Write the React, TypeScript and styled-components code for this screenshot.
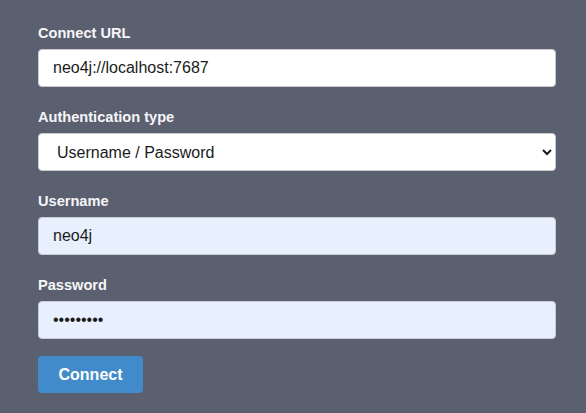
import React from "react";
import styled, { createGlobalStyle } from "styled-components";

const Global = createGlobalStyle`
  html, body { margin: 0; padding: 0; background: #5b6070; }
  body { font-family: "Liberation Sans", Arial, sans-serif; }
`;

const Form = styled.form`
  display: flex;
  flex-direction: column;
  padding: 25px 30px 20px 38px;
`;

const Field = styled.div`
  display: flex;
  flex-direction: column;
  margin-bottom: 22px;
  &:last-of-type { margin-bottom: 17px; }
`;

const Label = styled.label`
  font-size: 14.6px;
  font-weight: bold;
  color: #f6f6f8;
  line-height: 16px;
  margin-bottom: 8px;
`;

const Input = styled.input<{ $autofill?: boolean }>`
  box-sizing: border-box;
  height: 38px;
  width: 100%;
  padding: 0 14px;
  font-family: "Liberation Sans", Arial, sans-serif;
  font-size: 16px;
  color: #1a1c20;
  background: ${(p) => (p.$autofill ? "#e8f0fe" : "#ffffff")};
  border: 1px solid #c9cbd1;
  border-radius: 4px;
  outline: none;
`;

const Select = styled.select`
  box-sizing: border-box;
  height: 38px;
  width: 100%;
  padding: 0 4px 0 14px;
  font-family: "Liberation Sans", Arial, sans-serif;
  font-size: 16px;
  color: #1a1c20;
  background: #ffffff;
  border: 1px solid #c9cbd1;
  border-radius: 4px;
  outline: none;
`;

const Button = styled.button`
  align-self: flex-start;
  box-sizing: border-box;
  width: 105px;
  height: 37px;
  border: none;
  border-radius: 4px;
  background: #428bca;
  color: #ffffff;
  font-family: "Liberation Sans", Arial, sans-serif;
  font-size: 16px;
  font-weight: bold;
  cursor: pointer;
`;

export default function App() {
  return (
    <>
      <Global />
      <Form onSubmit={(e) => e.preventDefault()}>
        <Field>
          <Label htmlFor="url">Connect URL</Label>
          <Input id="url" defaultValue="neo4j://localhost:7687" />
        </Field>
        <Field>
          <Label htmlFor="auth">Authentication type</Label>
          <Select id="auth" defaultValue="basic">
            <option value="basic">Username / Password</option>
            <option value="none">No authentication</option>
          </Select>
        </Field>
        <Field>
          <Label htmlFor="user">Username</Label>
          <Input id="user" $autofill defaultValue="neo4j" />
        </Field>
        <Field>
          <Label htmlFor="pass">Password</Label>
          <Input id="pass" type="password" $autofill defaultValue="neo4jneo4" />
        </Field>
        <Button type="submit">Connect</Button>
      </Form>
    </>
  );
}
